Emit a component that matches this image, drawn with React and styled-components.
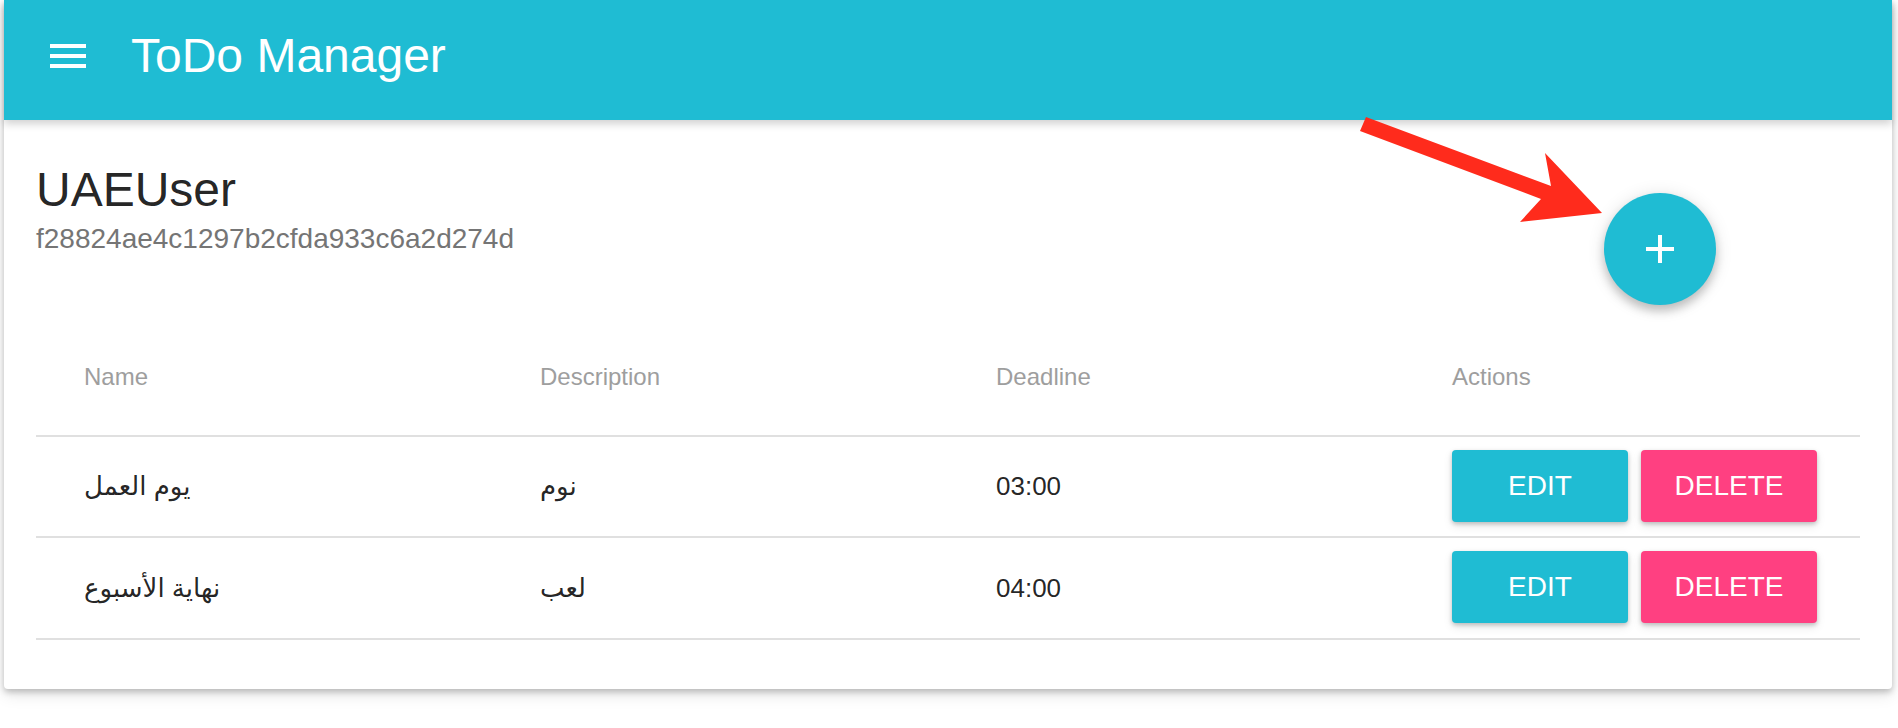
import React from "react";
import styled, { createGlobalStyle } from "styled-components";

const GlobalStyle = createGlobalStyle`
  html, body { margin: 0; padding: 0; background: #ffffff; }
  body { font-family: "Liberation Sans", "DejaVu Sans", Arial, sans-serif; }
  * { box-sizing: border-box; }
`;

const CYAN = "#1fbcd3";
const PINK = "#ff4081";

const Page = styled.div`
  position: relative;
  width: 1898px;
  padding: 0 6px 30px 4px;
`;

const Paper = styled.div`
  background: #fff;
  border-radius: 0 0 4px 4px;
  box-shadow: 0 3px 6px rgba(0, 0, 0, 0.22), 0 6px 16px rgba(0, 0, 0, 0.1);
`;

const AppBar = styled.header`
  position: relative;
  z-index: 1;
  height: 120px;
  padding: 0 0 8px 40px;
  background: ${CYAN};
  display: flex;
  align-items: center;
  box-shadow: 0 4px 8px rgba(0, 0, 0, 0.18);
`;

const MenuButton = styled.span`
  display: flex;
  width: 48px;
  height: 48px;
  color: #fff;
`;

const AppTitle = styled.h1`
  margin: 0 0 0 39px;
  font-size: 48px;
  line-height: 56px;
  font-weight: 400;
  color: #fff;
`;

const Content = styled.main`
  padding: 42px 32px 49px;
`;

const TopRow = styled.div`
  display: flex;
  justify-content: space-between;
  align-items: flex-start;
`;

const UserInfo = styled.div`
  display: flex;
  flex-direction: column;
  gap: 5px;
`;

const UserName = styled.h2`
  margin: 0;
  font-size: 48px;
  line-height: 56px;
  font-weight: 400;
  color: rgba(0, 0, 0, 0.87);
`;

const UserHash = styled.div`
  font-size: 28px;
  line-height: 32px;
  color: #757575;
`;

const Fab = styled.button`
  width: 112px;
  height: 112px;
  margin: 31px 144px 0 0;
  border: none;
  border-radius: 50%;
  background: ${CYAN};
  color: #fff;
  display: flex;
  align-items: center;
  justify-content: center;
  box-shadow: 0 6px 10px rgba(0, 0, 0, 0.2), 0 2px 18px rgba(0, 0, 0, 0.12);
  padding: 0;
`;

const Table = styled.table`
  width: 100%;
  margin-top: 19px;
  border-collapse: collapse;
  table-layout: fixed;
`;

const HeadRow = styled.tr`
  height: 112px;
  border-bottom: 2px solid #e0e0e0;
`;

const BodyRow = styled.tr`
  height: ${(p) => p.$height}px;
  border-bottom: 2px solid #e0e0e0;
`;

const Th = styled.th`
  padding: 0 0 5px 48px;
  text-align: left;
  font-weight: 400;
  font-size: 24px;
  color: #9e9e9e;
`;

const Td = styled.td`
  padding: 0 0 0 48px;
  text-align: left;
  font-size: 26px;
  color: rgba(0, 0, 0, 0.87);
`;

const Actions = styled.div`
  display: flex;
  gap: 13px;
  margin-top: -2px;
`;

const ActionButton = styled.button`
  min-width: 176px;
  height: 72px;
  border: none;
  border-radius: 4px;
  background: ${(p) => p.$color};
  color: #fff;
  font-family: inherit;
  font-size: 28px;
  text-transform: uppercase;
  padding: 0 32px;
  box-shadow: 0 2px 4px rgba(0, 0, 0, 0.2), 0 4px 10px rgba(0, 0, 0, 0.1);
`;

const ArrowOverlay = styled.svg`
  position: absolute;
  left: 0;
  top: 0;
  width: 1898px;
  height: 728px;
  pointer-events: none;
  z-index: 2;
`;

const MenuIcon = () => (
  <svg width="48" height="48" viewBox="0 0 24 24" fill="currentColor">
    <path d="M3 18h18v-2H3v2zm0-5h18v-2H3v2zm0-7v2h18V6H3z" />
  </svg>
);

const AddIcon = () => (
  <svg width="48" height="48" viewBox="0 0 24 24" fill="currentColor">
    <path d="M19 13h-6v6h-2v-6H5v-2h6V5h2v6h6v2z" />
  </svg>
);

const todos = [
  { name: "يوم العمل", description: "نوم", deadline: "03:00", height: 101 },
  { name: "نهاية الأسبوع", description: "لعب", deadline: "04:00", height: 102 },
];

export default function App() {
  return (
    <>
      <GlobalStyle />
      <Page>
        <Paper>
          <AppBar>
            <MenuButton>
              <MenuIcon />
            </MenuButton>
            <AppTitle>ToDo Manager</AppTitle>
          </AppBar>
          <Content>
            <TopRow>
              <UserInfo>
                <UserName>UAEUser</UserName>
                <UserHash>f28824ae4c1297b2cfda933c6a2d274d</UserHash>
              </UserInfo>
              <Fab aria-label="add">
                <AddIcon />
              </Fab>
            </TopRow>
            <Table>
              <thead>
                <HeadRow>
                  <Th>Name</Th>
                  <Th>Description</Th>
                  <Th>Deadline</Th>
                  <Th>Actions</Th>
                </HeadRow>
              </thead>
              <tbody>
                {todos.map((t, i) => (
                  <BodyRow key={i} $height={t.height}>
                    <Td>{t.name}</Td>
                    <Td>{t.description}</Td>
                    <Td>{t.deadline}</Td>
                    <Td>
                      <Actions>
                        <ActionButton $color={CYAN}>Edit</ActionButton>
                        <ActionButton $color={PINK}>Delete</ActionButton>
                      </Actions>
                    </Td>
                  </BodyRow>
                ))}
              </tbody>
            </Table>
          </Content>
        </Paper>
        <ArrowOverlay viewBox="0 0 1898 728">
          <polygon
            fill="#ff2b1c"
            points="1366,117 1551,186 1545,153 1602,213 1520,222 1541,199 1360,131"
          />
        </ArrowOverlay>
      </Page>
    </>
  );
}
